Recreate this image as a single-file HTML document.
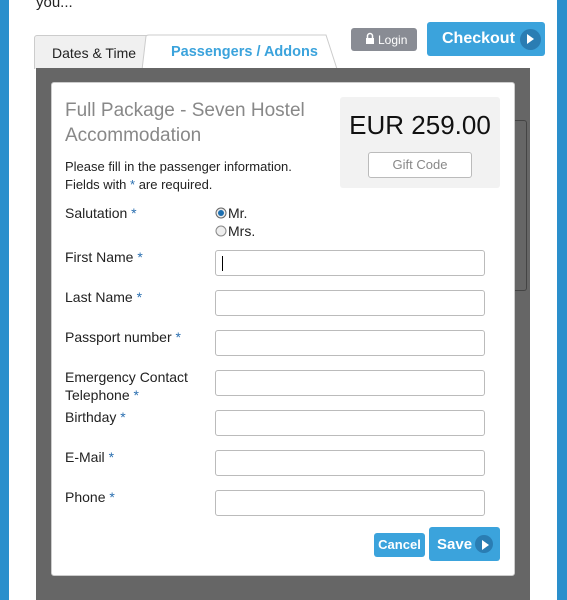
<!DOCTYPE html>
<html><head><style>
*{box-sizing:border-box;margin:0;padding:0}
body{width:567px;height:600px;overflow:hidden;background:#2a8fcc;font-family:"Liberation Sans","DejaVu Sans",sans-serif;position:relative}
.page{position:absolute;left:9px;top:0;width:548px;height:600px;background:#fff}
.a{position:absolute}
.lbl{position:absolute;left:65px;font-size:14px;color:#222;line-height:18px}
.lbl b,.star{color:#2a6fb0;font-weight:normal}
.inp{position:absolute;left:215px;width:270px;height:26px;border:1px solid #bbb;border-radius:3px;background:#fff}
.btn{position:absolute;background:#3ba3dc;color:#fff;font-weight:bold;border-radius:3px}
.play{position:absolute;border-radius:50%;background:#2a7db3}
.play:after{content:"";position:absolute;left:7px;top:5px;border-left:7px solid #fff;border-top:5px solid transparent;border-bottom:5px solid transparent}
</style></head><body>
<div class="page"></div>
<div class="a" style="left:36px;top:-6px;font-size:15px;color:#222">you...</div>
<div class="a" style="left:34px;top:35px;width:118px;height:34px;background:#f0f0f0;border:1px solid #ccc;border-bottom:none;border-radius:3px 3px 0 0;font-size:14px;color:#222;padding:9px 0 0 17px">Dates &amp; Time</div>
<svg class="a" style="left:140px;top:34px" width="200" height="36"><path d="M2 36 L6 2 Q7 1 9 1 L186 1 L197 35 Z" fill="#fff" stroke="#ccc"/></svg>
<div class="a" style="left:171px;top:44px;font-size:14.5px;font-weight:bold;color:#3ba3dc">Passengers / Addons</div>
<div class="a" style="left:351px;top:28px;width:66px;height:23px;background:#898c94;border-radius:3px;color:#fff;font-size:12px;padding:5px 0 0 27px">Login</div>
<svg class="a" style="left:365px;top:32px" width="10" height="13"><path d="M2.5 6 V4 A2.5 2.5 0 0 1 7.5 4 V6" stroke="#fff" stroke-width="1.5" fill="none"/><rect x="1" y="6" width="8" height="6" fill="#fff"/></svg>
<div class="btn" style="left:427px;top:22px;width:118px;height:34px;font-size:16px;padding:8px 0 0 15px">Checkout</div>
<div class="play" style="left:520px;top:29px;width:21px;height:21px"></div>
<div class="a" style="left:36px;top:68px;width:494px;height:532px;background:#666"></div>
<div class="a" style="left:515px;top:120px;width:12px;height:171px;border:1px solid #444;border-left:none;border-radius:0 3px 3px 0"></div>
<div class="a" style="left:51px;top:82px;width:464px;height:494px;background:#fff;border:1px solid #ccc;border-radius:3px"></div>
<div class="a" style="left:65px;top:98px;font-size:19px;color:#888;line-height:25px">Full Package - Seven Hostel<br>Accommodation</div>
<div class="a" style="left:340px;top:97px;width:160px;height:91px;background:#f2f2f2;border-radius:3px"></div>
<div class="a" style="left:340px;top:110px;width:160px;text-align:center;font-size:26px;color:#111">EUR 259.00</div>
<div class="a" style="left:368px;top:152px;width:104px;height:26px;background:#fff;border:1px solid #bbb;border-radius:3px;text-align:center;font-size:13px;color:#888;line-height:24px">Gift Code</div>
<div class="lbl" style="top:158px;font-size:13px">Please fill in the passenger information.<br>Fields with <b>*</b> are required.</div>
<div class="lbl" style="top:204px">Salutation <b>*</b></div>
<svg class="a" style="left:215px;top:207px" width="12" height="30"><circle cx="6" cy="6" r="5" fill="#eee" stroke="#666"/><circle cx="6" cy="6" r="3" fill="#1d6fb0"/><circle cx="6" cy="24" r="5" fill="#eee" stroke="#888"/></svg>
<div class="a" style="left:228px;top:204px;font-size:14px;line-height:18px;color:#222">Mr.<br>Mrs.</div>
<div class="lbl" style="top:248px">First Name <b>*</b></div>
<div class="inp" style="top:250px"><div class="a" style="left:6px;top:5px;width:1px;height:15px;background:#000"></div></div>
<div class="lbl" style="top:288px">Last Name <b>*</b></div><div class="inp" style="top:290px"></div>
<div class="lbl" style="top:328px">Passport number <b>*</b></div><div class="inp" style="top:330px"></div>
<div class="lbl" style="top:368px">Emergency Contact<br>Telephone <b>*</b></div><div class="inp" style="top:370px"></div>
<div class="lbl" style="top:408px">Birthday <b>*</b></div><div class="inp" style="top:410px"></div>
<div class="lbl" style="top:448px">E-Mail <b>*</b></div><div class="inp" style="top:450px"></div>
<div class="lbl" style="top:488px">Phone <b>*</b></div><div class="inp" style="top:490px"></div>
<div class="btn" style="left:374px;top:533px;width:51px;height:24px;font-size:13px;text-align:center;line-height:24px">Cancel</div>
<div class="btn" style="left:429px;top:527px;width:71px;height:34px;font-size:15px;padding:9px 0 0 8px">Save</div>
<div class="play" style="left:475px;top:535px;width:18px;height:18px"></div>
</body></html>
